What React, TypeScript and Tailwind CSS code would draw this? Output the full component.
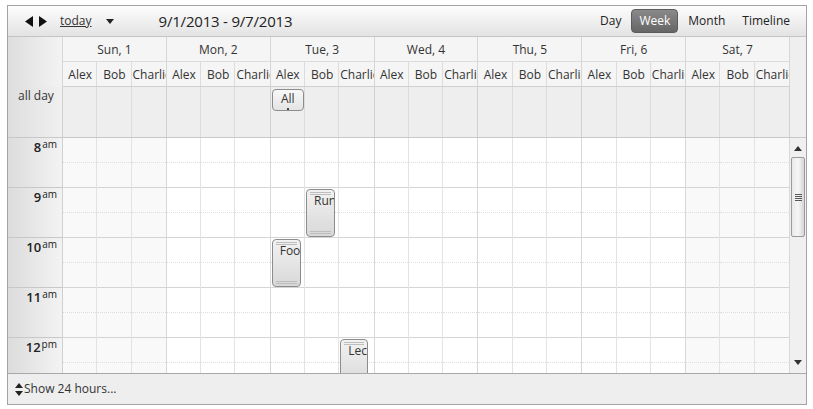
const days = ["Sun, 1", "Mon, 2", "Tue, 3", "Wed, 4", "Thu, 5", "Fri, 6", "Sat, 7"];
const people = ["Alex", "Bob", "Charlie"];
const hours = [
  { h: "8", s: "am" },
  { h: "9", s: "am" },
  { h: "10", s: "am" },
  { h: "11", s: "am" },
  { h: "12", s: "pm" },
];

function Appt({ label, className }: { label: string; className: string }) {
  return (
    <div
      className={`absolute overflow-hidden rounded-[4px] border border-[#8c8c8c] bg-gradient-to-b from-[#f2f2f2] to-[#d8d8d8] ${className}`}
    >
      <div className="mx-[3px] mt-[2px] h-[3px] border-y border-[#bdbdbd]" />
      <div className="whitespace-nowrap pl-[7px] text-[12px] leading-[12px] text-[#333]">{label}</div>
      <div className="absolute inset-x-[3px] bottom-[2px] h-[3px] border-y border-[#bdbdbd]" />
    </div>
  );
}

export default function App() {
  return (
    <div className="h-[409px] w-[813px] bg-white pl-[7px] pt-[5px] font-['Open_Sans',sans-serif] text-[12px] text-[#333]">
      <div className="flex h-[400px] w-[800px] flex-col overflow-hidden border border-[#a3a3a3]">
        {/* toolbar */}
        <div className="flex h-[31px] shrink-0 items-center border-b border-[#c4c4c4] bg-gradient-to-b from-[#fdfdfd] to-[#e3e3e3]">
          <div className="ml-[17px] flex items-center gap-[6px] text-[#111]">
            <svg width="8" height="11" viewBox="0 0 8 11"><path d="M8 0 L0 5.5 L8 11 Z" fill="#111" /></svg>
            <svg width="8" height="11" viewBox="0 0 8 11"><path d="M0 0 L8 5.5 L0 11 Z" fill="#111" /></svg>
          </div>
          <span className="ml-[13px] text-[12px] underline">today</span>
          <svg className="ml-[14px]" width="8" height="5" viewBox="0 0 8 5"><path d="M0 0 H8 L4 5 Z" fill="#222" /></svg>
          <span className="ml-[45px] text-[15px] tracking-[-0.2px] text-[#222]">9/1/2013 - 9/7/2013</span>
          <div className="ml-auto mr-[12px] flex items-center text-[12px] text-[#222]">
            <span className="px-[4px]">Day</span>
            <span className="mx-[6px] rounded-[4px] border border-[#5c5c5c] bg-gradient-to-b from-[#8a8a8a] to-[#666] px-[7px] py-[2px] text-white">Week</span>
            <span className="px-[4px]">Month</span>
            <span className="ml-[9px] px-[4px]">Timeline</span>
          </div>
        </div>

        {/* headers */}
        <div className="flex shrink-0 bg-[#f5f5f5]">
          <div className="w-[55px] shrink-0 border-r border-[#d6d6d6] bg-gradient-to-r from-[#dedede] to-[#f3f3f3]" />
          <div className="grid flex-1 grid-cols-7">
            {days.map((d) => (
              <div key={d} className="border-r border-[#d6d6d6]">
                <div className="flex h-[25px] items-center justify-center border-b border-[#dcdcdc] pt-[1px] text-[12px]">{d}</div>
                <div className="grid h-[25px] grid-cols-3 border-b border-[#d0d0d0]">
                  {people.map((p, i) => (
                    <div
                      key={p}
                      className={`overflow-hidden whitespace-nowrap pl-[1px] text-center text-[12px] leading-[25px] ${i < 2 ? "border-r border-[#dcdcdc]" : ""}`}
                    >
                      {p}
                    </div>
                  ))}
                </div>
              </div>
            ))}
          </div>
          <div className="w-[16px] shrink-0 bg-[#efefef]" />
        </div>

        {/* all day */}
        <div className="flex h-[51px] shrink-0 border-b border-[#c8c8c8] bg-[#eeeeee]">
          <div className="w-[55px] shrink-0 border-r border-[#d0d0d0] bg-gradient-to-r from-[#dedede] to-[#f0f0f0] pl-[10px] text-[12px] leading-[18px]">
            all day
          </div>
          <div className="grid flex-1 grid-cols-7">
            {days.map((d, di) => (
              <div key={d} className="grid grid-cols-3 border-r border-[#d0d0d0]">
                {people.map((p, i) => (
                  <div key={p} className={`relative ${i < 2 ? "border-r border-[#dcdcdc]" : ""}`}>
                    {di === 2 && i === 0 && (
                      <div className="absolute left-[1px] top-[2px] h-[22px] w-[32px] overflow-hidden rounded-[4px] border border-[#8c8c8c] bg-gradient-to-b from-[#f8f8f8] to-[#e4e4e4] pt-[2px] text-center text-[12px] leading-[14px]">
                        All
                        <div className="mx-auto mt-[2px] h-[2px] w-[2px] bg-[#444]" />
                      </div>
                    )}
                  </div>
                ))}
              </div>
            ))}
          </div>
          <div className="w-[16px] shrink-0 bg-[#efefef]" />
        </div>

        {/* hours */}
        <div className="flex h-[235px] shrink-0 overflow-hidden">
          <div className="w-[55px] shrink-0 border-r border-[#d0d0d0] bg-gradient-to-r from-[#dcdcdc] to-[#f3f3f3]">
            {hours.map((h) => (
              <div key={h.h} className="flex h-[50px] items-start justify-end border-b border-[#c8c8c8] pr-[5px] pt-[1px] text-[#222]">
                <span className="text-[13px] font-semibold leading-[16px]">{h.h}</span>
                <span className="ml-[1px] text-[10px] leading-[11px]">{h.s}</span>
              </div>
            ))}
          </div>
          <div className="grid flex-1 grid-cols-7">
            {days.map((d, di) => (
              <div
                key={d}
                className={`grid grid-cols-3 border-r border-[#d8d8d8] ${di === 0 || di === 6 ? "bg-[#f9f9f9]" : "bg-white"}`}
              >
                {people.map((p, i) => (
                  <div key={p} className={`relative ${i < 2 ? "border-r border-[#e3e3e3]" : ""}`}>
                    {hours.map((h) => (
                      <div key={h.h} className="h-[50px] border-b border-[#d4d4d4]">
                        <div className="h-[25px] border-b border-dotted border-[#dedede]" />
                      </div>
                    ))}
                    {di === 2 && i === 1 && <Appt label="Run" className="left-[1px] top-[51px] h-[48px] w-[29px]" />}
                    {di === 2 && i === 0 && <Appt label="Foo" className="left-[1px] top-[101px] h-[48px] w-[29px]" />}
                    {di === 2 && i === 2 && <Appt label="Lec" className="left-[1px] top-[201px] h-[48px] w-[28px]" />}
                  </div>
                ))}
              </div>
            ))}
          </div>
          {/* scrollbar */}
          <div className="flex w-[16px] shrink-0 flex-col items-center bg-[#f0f0f0]">
            <svg className="mt-[8px]" width="8" height="5" viewBox="0 0 8 5"><path d="M4 0 L8 5 H0 Z" fill="#333" /></svg>
            <div className="mt-[6px] flex h-[80px] w-[14px] items-center justify-center rounded-[2px] border border-[#9a9a9a] bg-gradient-to-r from-[#e8e8e8] via-[#f6f6f6] to-[#d6d6d6]">
              <div className="flex flex-col gap-[1px]">
                <div className="h-[1px] w-[7px] bg-[#555]" />
                <div className="h-[1px] w-[7px] bg-[#555]" />
                <div className="h-[1px] w-[7px] bg-[#555]" />
                <div className="h-[1px] w-[7px] bg-[#555]" />
              </div>
            </div>
            <svg className="mt-auto mb-[8px]" width="8" height="5" viewBox="0 0 8 5"><path d="M0 0 H8 L4 5 Z" fill="#333" /></svg>
          </div>
        </div>

        {/* footer */}
        <div className="flex flex-1 items-center border-t border-[#a8a8a8] bg-[#eeeeee] pl-[7px] text-[12px] text-[#333]">
          <svg width="8" height="13" viewBox="0 0 8 13">
            <path d="M4 0 L8 5 H0 Z" fill="#222" />
            <path d="M0 8 H8 L4 13 Z" fill="#222" />
          </svg>
          <span className="ml-[1px]">Show 24 hours...</span>
        </div>
      </div>
    </div>
  );
}
